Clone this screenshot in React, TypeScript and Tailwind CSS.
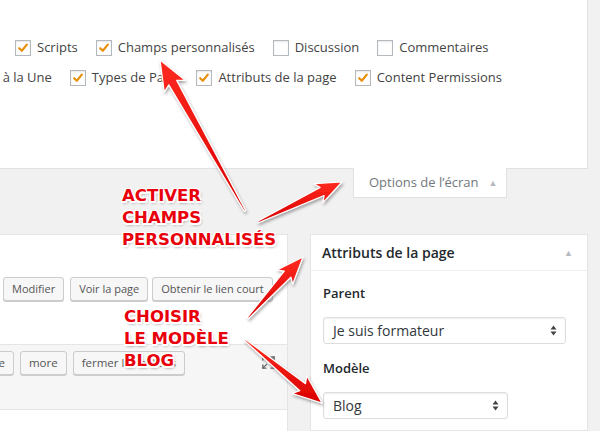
import { Expand } from 'lucide-react';

type Pt = [number, number];

// tapered red arrow from tail to tip
function arrowPoints(tail: Pt, tip: Pt, headLen: number, headW: number) {
  const dx = tip[0] - tail[0];
  const dy = tip[1] - tail[1];
  const len = Math.hypot(dx, dy);
  const ux = dx / len;
  const uy = dy / len;
  const nx = -uy;
  const ny = ux;
  const bx = tip[0] - ux * headLen;
  const by = tip[1] - uy * headLen;
  const w0 = 0.8;
  const w1 = 4.5;
  const hw = headW / 2;
  const pts: Pt[] = [
    [tail[0] + nx * w0, tail[1] + ny * w0],
    [bx + nx * w1, by + ny * w1],
    [bx + nx * hw - ux * 4, by + ny * hw - uy * 4],
    tip,
    [bx - nx * hw - ux * 4, by - ny * hw - uy * 4],
    [bx - nx * w1, by - ny * w1],
    [tail[0] - nx * w0, tail[1] - ny * w0],
  ];
  return pts.map(p => `${p[0].toFixed(1)},${p[1].toFixed(1)}`).join(' ');
}

const arrows: { tail: Pt; tip: Pt; head: number; w: number }[] = [
  { tail: [245, 211], tip: [160, 60], head: 26, w: 24 },
  { tail: [258, 222], tip: [342, 182], head: 22, w: 21 },
  { tail: [248, 318], tip: [303, 257], head: 23, w: 21 },
  { tail: [245, 340], tip: [322, 403], head: 25, w: 23 },
];

function Checkbox({ checked }: { checked: boolean }) {
  return (
    <span className="w-4 h-4 shrink-0 bg-white border border-[#b4b9be] shadow-[inset_0_1px_2px_rgba(0,0,0,0.1)] flex items-center justify-center">
      {checked && (
        <svg width="12" height="12" viewBox="0 0 12 12">
          <path d="M2.2 6.2 L4.8 8.8 L9.8 2.6" fill="none" stroke="#e8900c" strokeWidth="2.2" strokeLinecap="round" strokeLinejoin="round" />
        </svg>
      )}
    </span>
  );
}

function Option({ label, checked }: { label: string; checked: boolean }) {
  return (
    <label className="flex items-center gap-[6px] whitespace-nowrap">
      <Checkbox checked={checked} />
      <span>{label}</span>
    </label>
  );
}

function WpButton({ children, className = '' }: { children: React.ReactNode; className?: string }) {
  return (
    <span className={`h-[24px] px-[8px] flex items-center whitespace-nowrap text-[#555] bg-[#f7f7f7] border border-[#ccc] rounded-[3px] shadow-[0_1px_0_#ccc] ${className}`}>
      {children}
    </span>
  );
}

function Select({ value, width }: { value: string; width: string }) {
  return (
    <div className={`${width} h-[27px] flex items-center justify-between pl-[9px] pr-[8px] bg-white border border-[#ddd] rounded-[3px] shadow-[inset_0_1px_2px_rgba(0,0,0,0.07)] text-[14px] text-[#32373c]`}>
      <span>{value}</span>
      <svg width="7" height="11" viewBox="0 0 7 11">
        <path d="M3.5 0.5 L6.5 4.5 H0.5 Z M3.5 10.5 L6.5 6.5 H0.5 Z" fill="#444" />
      </svg>
    </div>
  );
}

const outline =
  '[text-shadow:-1.5px_-1.5px_0_#fff,1.5px_-1.5px_0_#fff,-1.5px_1.5px_0_#fff,1.5px_1.5px_0_#fff,0_-1.5px_0_#fff,0_1.5px_0_#fff,0_0_2px_#fff,1px_2px_3px_rgba(0,0,0,0.5)]';

export default function App() {
  return (
    <div className="relative w-[600px] h-[431px] overflow-hidden bg-[#f1f1f1] font-['Open_Sans',sans-serif] text-[#444]">
      {/* Screen options panel */}
      <div className="w-[588px] h-[169px] bg-white border-b border-r border-[#e1e1e1] pt-[38px] text-[13px] text-[#444]">
        <div className="flex items-center h-5 pl-[15px] gap-[18px]">
          <Option label="Scripts" checked />
          <Option label="Champs personnalisés" checked />
          <Option label="Discussion" checked={false} />
          <Option label="Commentaires" checked={false} />
        </div>
        <div className="flex items-center h-5 mt-[10px] ml-[-60px] gap-[18px]">
          <Option label="Image à la Une" checked />
          <Option label="Types de Page" checked />
          <Option label="Attributs de la page" checked />
          <Option label="Content Permissions" checked />
        </div>
      </div>

      {/* Screen options tab */}
      <div className="w-[588px] flex justify-end -mt-px">
        <div className="mr-[81px] w-[154px] h-[30px] bg-white border border-t-0 border-[#e1e1e1] flex items-center pl-[15px] text-[13px] text-[#72777c]">
          <span>Options de l’écran</span>
          <span className="ml-[10px] text-[9px] text-[#b4b9be]">▲</span>
        </div>
      </div>

      {/* Content row */}
      <div className="flex mt-[36px]">
        {/* Editor column */}
        <div className="w-[288px] h-[197px] bg-white border-t border-r border-[#e5e5e5] shrink-0">
          <div className="flex items-center mt-[42px] pl-[3px] text-[11px]">
            <WpButton>Modifier</WpButton>
            <WpButton className="ml-[6px]">Voir la page</WpButton>
            <WpButton className="ml-[4px]">Obtenir le lien court</WpButton>
          </div>
          <div className="mt-[43px] h-[66px] bg-[#f6f6f6] border-y border-[#e5e5e5] pt-[6px] flex items-start text-[11.5px]">
            <WpButton className="ml-[-30px]">code</WpButton>
            <WpButton className="ml-[6px]">more</WpButton>
            <WpButton className="ml-[6px]">fermer les balises</WpButton>
            <Expand size={15} strokeWidth={2.2} className="ml-auto mr-[11px] mt-[4px] text-[#666]" />
          </div>
        </div>

        {/* Page attributes box */}
        <div className="ml-[22px] w-[278px] h-[197px] bg-white border border-[#e5e5e5] shadow-[0_1px_1px_rgba(0,0,0,0.04)] shrink-0">
          <div className="h-[36px] border-b border-[#eee] flex items-center justify-between pl-[11px] pr-[14px]">
            <span className="text-[14px] font-semibold text-[#23282d]">Attributs de la page</span>
            <span className="text-[9px] text-[#b4b9be]">▲</span>
          </div>
          <div className="px-[12px]">
            <div className="mt-[13px] text-[13px] font-semibold text-[#23282d]">Parent</div>
            <div className="mt-[13px]">
              <Select value="Je suis formateur" width="w-[243px]" />
            </div>
            <div className="mt-[15px] text-[13px] font-semibold text-[#23282d]">Modèle</div>
            <div className="mt-[14px]">
              <Select value="Blog" width="w-[185px]" />
            </div>
          </div>
        </div>
      </div>

      {/* Annotation arrows */}
      <svg className="absolute inset-0 pointer-events-none" width="600" height="431" viewBox="0 0 600 431">
        <defs>
          <linearGradient id="red" x1="0" y1="0" x2="0" y2="1">
            <stop offset="0" stopColor="#ff2a1f" />
            <stop offset="1" stopColor="#d90000" />
          </linearGradient>
          <filter id="shadow" x="-20%" y="-20%" width="140%" height="140%">
            <feDropShadow dx="1" dy="2" stdDeviation="1.5" floodColor="#000" floodOpacity="0.35" />
          </filter>
        </defs>
        {arrows.map((a, i) => (
          <polygon
            key={i}
            points={arrowPoints(a.tail, a.tip, a.head, a.w)}
            fill="url(#red)"
            stroke="#fff"
            strokeWidth="1.2"
            strokeLinejoin="round"
            filter="url(#shadow)"
          />
        ))}
      </svg>

      {/* Annotation labels */}
      <div className={`absolute left-[122px] top-[185px] font-['DejaVu_Sans',sans-serif] font-bold text-[16.5px] leading-[22px] text-[#e8000b] ${outline}`}>
        <div>ACTIVER</div>
        <div>CHAMPS</div>
        <div>PERSONNALISÉS</div>
      </div>
      <div className={`absolute left-[124px] top-[306px] font-['DejaVu_Sans',sans-serif] font-bold text-[16.5px] leading-[22px] text-[#e8000b] ${outline}`}>
        <div>CHOISIR</div>
        <div>LE MODÈLE</div>
        <div>BLOG</div>
      </div>
    </div>
  );
}
